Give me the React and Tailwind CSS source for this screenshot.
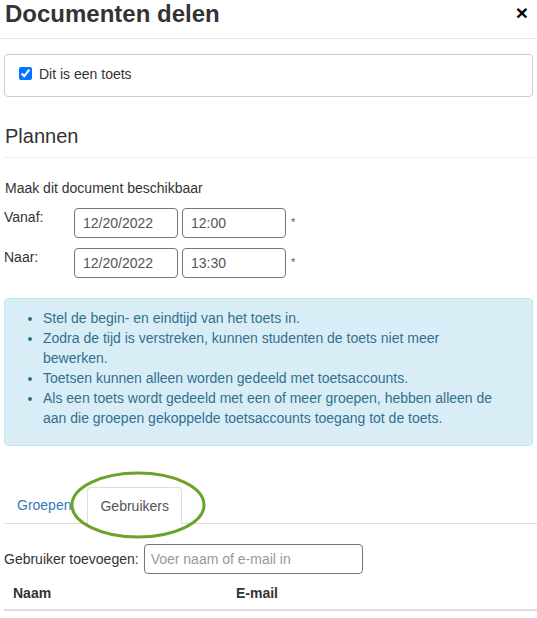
import React from 'react';

const tips = [
  'Stel de begin- en eindtijd van het toets in.',
  'Zodra de tijd is verstreken, kunnen studenten de toets niet meer bewerken.',
  'Toetsen kunnen alleen worden gedeeld met toetsaccounts.',
  'Als een toets wordt gedeeld met een of meer groepen, hebben alleen de aan die groepen gekoppelde toetsaccounts toegang tot de toets.',
];

const TimeRow = ({ label, date, time }) => (
  <div className="flex items-start h-[30px]">
    <div className="w-[74px] pl-[4px] -mt-[1px]">{label}</div>
    <div className="w-[104px] h-[30px] border border-[#767676] rounded-[4px] px-[8px] flex items-center text-[#555]">{date}</div>
    <div className="ml-[4px] w-[104px] h-[30px] border border-[#767676] rounded-[4px] px-[8px] flex items-center text-[#555]">{time}</div>
    <span className="ml-[5px] mt-[4px] text-[11px] text-[#555]">*</span>
  </div>
);

const App = () => {
  return (
    <div className="relative w-[537px] h-[618px] overflow-hidden bg-white text-[14px] text-[#333] font-['Liberation_Sans',Arial,sans-serif] leading-[20px]">
      {/* kop */}
      <div className="flex justify-between items-start h-[39px] border-b border-[#e5e5e5]">
        <h1 className="pl-[5px] pt-[1px] text-[24px] font-bold leading-[26px]">Documenten delen</h1>
        <span className="mr-[9px] mt-[1px] text-[21px] font-bold leading-[24px] text-black">×</span>
      </div>

      {/* toets */}
      <div className="mx-[4px] mt-[15px] h-[43px] border border-[#ccc] rounded-[4px] flex items-center pl-[14px] pb-[4px]">
        <input type="checkbox" defaultChecked readOnly className="w-[13px] h-[13px] m-0" />
        <span className="ml-[7px]">Dit is een toets</span>
      </div>

      {/* plannen */}
      <div className="ml-[4px] mt-[28px] pb-[10px] border-b border-[#eee]">
        <h2 className="pl-[1px] text-[20px] leading-[22px]">Plannen</h2>
      </div>
      <p className="pl-[5px] mt-[20px]">Maak dit document beschikbaar</p>
      <div className="mt-[10px] flex flex-col gap-[10px]">
        <TimeRow label="Vanaf:" date="12/20/2022" time="12:00" />
        <TimeRow label="Naar:" date="12/20/2022" time="13:30" />
      </div>

      {/* info */}
      <div className="mx-[4px] mt-[20px] h-[148px] bg-[#d9edf7] border border-[#bce8f1] rounded-[4px] text-[#31708f] pt-[9px] pr-[36px]">
        <ul className="list-disc pl-[38px]">
          {tips.map((t) => (
            <li key={t}>{t}</li>
          ))}
        </ul>
      </div>

      {/* tabs */}
      <div className="ml-[4px] mt-[41px] flex items-end h-[37px] border-b border-[#ddd]">
        <div className="pl-[13px] pr-[16px] h-[36px] flex items-center text-[#337ab7]">Groepen</div>
        <div className="-mb-[1px] h-[37px] px-[12px] flex items-center bg-white border border-[#ddd] border-b-white rounded-t-[4px] text-[#555]">Gebruikers</div>
      </div>

      {/* gebruiker toevoegen */}
      <div className="mt-[20px] flex items-center pl-[4px]">
        <span>Gebruiker toevoegen:</span>
        <div className="ml-[5px] w-[219px] h-[30px] border border-[#767676] rounded-[4px] px-[6px] flex items-center text-[#999]">Voer naam of e-mail in</div>
      </div>

      {/* tabel */}
      <div className="ml-[4px] mt-[2px] h-[35px] border-b-2 border-[#ddd] flex items-center font-bold">
        <div className="w-[232px] pl-[9px]">Naam</div>
        <div>E-mail</div>
      </div>

      {/* markering */}
      <svg className="absolute left-[69px] top-[470px]" width="138" height="70" viewBox="0 0 138 70">
        <ellipse cx="69" cy="35" rx="66" ry="32" fill="none" stroke="#6aa22b" strokeWidth="3" />
      </svg>
    </div>
  );
};

export default App;
